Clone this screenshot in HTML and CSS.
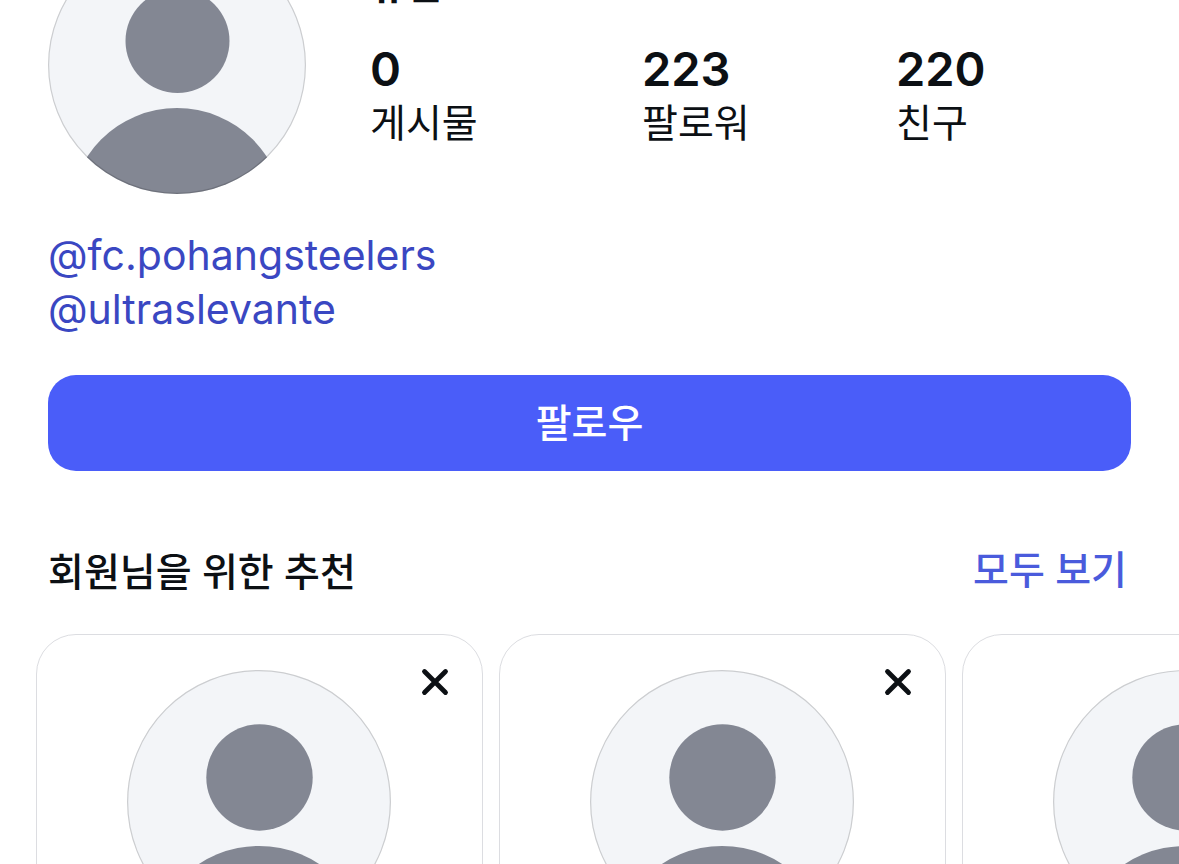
FILE: index.html
```html
<!DOCTYPE html>
<html lang="ko">
<head>
<meta charset="utf-8">
<meta name="viewport" content="width=device-width, initial-scale=1">
<title>프로필</title>
<link rel="stylesheet" href="styles.css">
</head>
<body>
<svg class="defs" aria-hidden="true">
  <symbol id="person" viewBox="0 0 258 258">
    <clipPath id="round"><circle cx="129" cy="129" r="129"/></clipPath>
    <g clip-path="url(#round)">
      <rect width="258" height="258" fill="#f3f5f8"/>
      <circle cx="129.500" cy="105" r="52" fill="#838793"/>
      <circle cx="129" cy="279" r="107" fill="#838793"/>
    </g>
    <circle cx="129" cy="129" r="128.400" fill="none" stroke="#000" stroke-opacity=".16" stroke-width="1.200"/>
  </symbol>
  <symbol id="close" viewBox="0 0 28 28">
    <path d="M3.500 3.500 24.500 24.500M24.500 3.500 3.500 24.500" fill="none" stroke="#0c1014" stroke-width="4.800" stroke-linecap="round"/>
  </symbol>
</svg>
<main class="page">
  <header class="profile">
    <svg class="avatar" role="img" aria-label="프로필 사진"><use href="#person"/></svg>
    <div class="details">
      <h1 class="name">유진</h1>
      <ul class="stats">
        <li><strong class="count">0</strong><span class="label">게시물</span></li>
        <li><strong class="count">223</strong><span class="label">팔로워</span></li>
        <li><strong class="count">220</strong><span class="label">친구</span></li>
      </ul>
    </div>
  </header>
  <div class="bio">
    <a href="#">@fc.pohangsteelers</a>
    <a href="#">@ultraslevante</a>
  </div>
  <button class="follow" type="button">팔로우</button>
  <section class="suggestions">
    <div class="heading">
      <h2 class="title">회원님을 위한 추천</h2>
      <a class="all" href="#">모두 보기</a>
    </div>
    <div class="cards">
      <article class="card">
        <svg class="photo" role="img" aria-label="프로필 사진"><use href="#person"/></svg>
        <button class="close" type="button" aria-label="닫기"><svg><use href="#close"/></svg></button>
      </article>
      <article class="card">
        <svg class="photo" role="img" aria-label="프로필 사진"><use href="#person"/></svg>
        <button class="close" type="button" aria-label="닫기"><svg><use href="#close"/></svg></button>
      </article>
      <article class="card">
        <svg class="photo" role="img" aria-label="프로필 사진"><use href="#person"/></svg>
        <button class="close" type="button" aria-label="닫기"><svg><use href="#close"/></svg></button>
      </article>
    </div>
  </section>
</main>
</body>
</html>
```
FILE: styles.css
```css
* {
  box-sizing: border-box;
}

body {
  margin: 0;
  height: 100vh;
  overflow: hidden;
  background: #fff;
  color: #0c1014;
  font-family: Inter, "Noto Sans CJK KR", sans-serif;
  font-size: 39px;
  line-height: 54px;
}

h1,
h2,
ul {
  margin: 0;
  padding: 0;
  font-size: inherit;
}

a {
  text-decoration: none;
}

button {
  border: 0;
  padding: 0;
  font: inherit;
  cursor: pointer;
}

.defs {
  position: absolute;
  width: 0;
  height: 0;
}

/* The view is scrolled a little past the top of the profile. */
.page {
  margin-top: -64px;
}

.profile {
  display: flex;
  align-items: flex-start;
  gap: 64px;
  padding: 0 48px;
}

.avatar {
  flex: none;
  width: 258px;
  height: 258px;
}

.details {
  flex: 1;
  padding-top: 22px;
}

.name {
  font-weight: 700;
}

.stats {
  display: grid;
  grid-template-columns: 272fr 254fr 235fr;
  margin-top: 30px;
  list-style: none;
}

.count,
.label {
  display: block;
}

.count {
  font-size: 47px;
  font-weight: 600;
}

.bio {
  display: flex;
  flex-direction: column;
  align-items: flex-start;
  padding: 34px 48px 0;
  font-size: 41px;
}

.bio a {
  color: #3a47c2;
}

.follow {
  display: block;
  width: calc(100% - 96px);
  height: 96px;
  margin: 39px 48px 0;
  border-radius: 28px;
  background: #4a5df9;
  color: #fff;
  font-weight: 500;
}

.heading {
  display: flex;
  align-items: flex-start;
  justify-content: space-between;
  padding: 72px 52px 0 48px;
}

.title {
  font-weight: 500;
  line-height: 58px;
}

.all {
  color: #4a5bdc;
  font-weight: 500;
}

.cards {
  display: flex;
  gap: 16px;
  margin-top: 33px;
  padding-left: 36px;
  overflow: hidden;
}

.card {
  position: relative;
  flex: none;
  width: 447px;
  height: 600px;
  padding: 35px 90px 0;
  border: 1px solid #dcdde1;
  border-radius: 40px;
}

.photo {
  display: block;
  width: 264px;
  height: 264px;
}

.close {
  position: absolute;
  top: 33px;
  right: 33px;
  width: 28px;
  height: 28px;
  background: none;
}

.close svg {
  display: block;
  width: 28px;
  height: 28px;
}
```
